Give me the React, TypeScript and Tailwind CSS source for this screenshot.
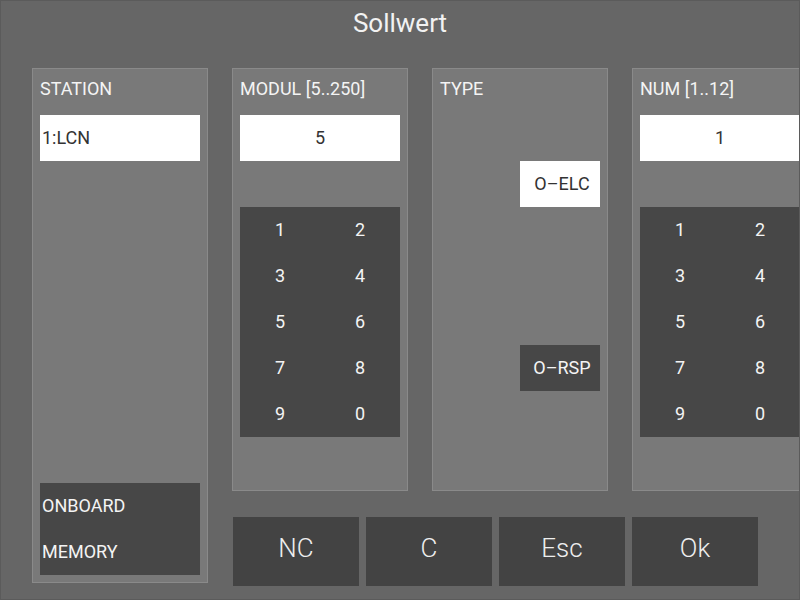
import React from "react";

const digits = ["1", "2", "3", "4", "5", "6", "7", "8", "9", "0"];

function Keypad() {
  return (
    <div className="grid grid-cols-2 w-[160px] bg-[#474747]">
      {digits.map((d) => (
        <div key={d} className="h-[46px] flex items-center justify-center pb-[2px] text-[18px] text-[#f4f4f4]">
          {d}
        </div>
      ))}
    </div>
  );
}

function Header({ children }: { children: React.ReactNode }) {
  return <div className="h-[46px] leading-[40px] text-[18px] text-[#f4f4f4] whitespace-nowrap">{children}</div>;
}

export default function App() {
  return (
    <div
      className="w-[800px] h-[600px] bg-[#666666] border border-[#5b5b5b] overflow-hidden flex flex-col"
      style={{ fontFamily: "Roboto, 'Liberation Sans', sans-serif" }}
    >
      <div className="h-[67px] shrink-0">
        <div className="h-[44px] leading-[44px] text-center text-[26px] text-[#f2f2f2]">Sollwert</div>
      </div>
      <div className="flex pl-[31px] gap-[24px]">
        {/* STATION */}
        <div className="w-[176px] h-[515px] shrink-0 border border-[#8a8a8a] bg-[#797979] px-[7px] flex flex-col">
          <Header>STATION</Header>
          <div className="h-[46px] bg-white flex items-center px-[2px] pb-[2px] text-[18px] text-[#333333]">1:LCN</div>
          <div className="flex-1" />
          <div className="h-[92px] bg-[#474747] px-[2px] text-[18px] text-[#f4f4f4] mb-[7px]">
            <div className="h-[46px] flex items-center pb-[2px]">ONBOARD</div>
            <div className="h-[46px] flex items-center pb-[2px]">MEMORY</div>
          </div>
        </div>
        {/* right column */}
        <div className="flex flex-col">
          <div className="flex gap-[24px]">
            {/* MODUL */}
            <div className="w-[176px] h-[423px] shrink-0 border border-[#8a8a8a] bg-[#797979] px-[7px] flex flex-col">
              <Header>MODUL [5..250]</Header>
              <div className="h-[46px] bg-white flex items-center justify-center pb-[2px] text-[18px] text-[#333333]">5</div>
              <div className="h-[46px]" />
              <Keypad />
            </div>
            {/* TYPE */}
            <div className="w-[176px] h-[423px] shrink-0 border border-[#8a8a8a] bg-[#797979] px-[7px] flex flex-col">
              <Header>TYPE</Header>
              <div className="h-[46px]" />
              <div className="self-end w-[80px] h-[46px] bg-white flex items-center justify-center pl-[4px] pb-[2px] text-[18px] text-[#333333]">
                O–ELC
              </div>
              <div className="h-[138px]" />
              <div className="self-end w-[80px] h-[46px] bg-[#474747] flex items-center justify-center pl-[4px] pb-[2px] text-[18px] text-[#f4f4f4]">
                O–RSP
              </div>
            </div>
            {/* NUM */}
            <div className="w-[176px] h-[423px] shrink-0 border border-[#8a8a8a] bg-[#797979] px-[7px] flex flex-col">
              <Header>NUM [1..12]</Header>
              <div className="h-[46px] bg-white flex items-center justify-center pb-[2px] text-[18px] text-[#333333]">1</div>
              <div className="h-[46px]" />
              <Keypad />
            </div>
          </div>
          <div className="flex gap-[7px] pl-px mt-[26px]">
            {["NC", "C", "Esc", "Ok"].map((b) => (
              <div
                key={b}
                className="w-[126px] h-[69px] bg-[#434343] flex items-center justify-center pb-[6px] text-[26px] font-light text-[#eeeeee]"
              >
                {b}
              </div>
            ))}
          </div>
        </div>
      </div>
    </div>
  );
}
